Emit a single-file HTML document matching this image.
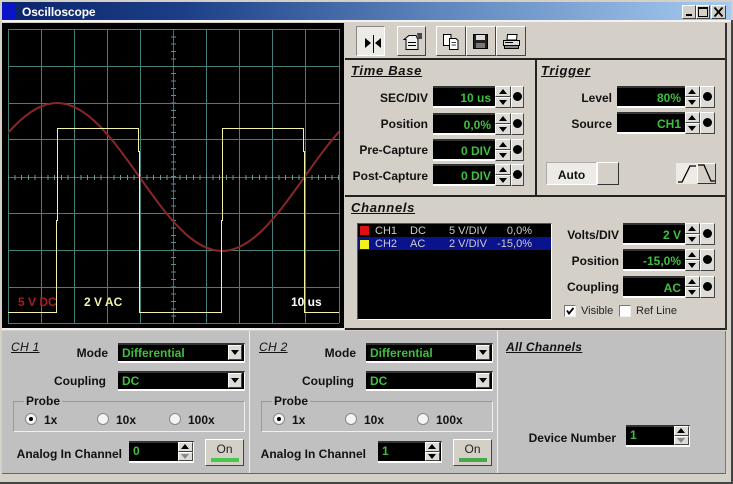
<!DOCTYPE html>
<html><head><meta charset="utf-8"><title>Oscilloscope</title>
<style>
html,body{margin:0;padding:0;background:#d4d0c8;}
#p{position:relative;width:733px;height:484px;overflow:hidden;background:#d4d0c8;font-family:"Liberation Sans",sans-serif;font-size:12px;color:#000;}
#p div,#p span.a{position:absolute;box-sizing:border-box;}
.l{font-weight:bold;text-align:right;white-space:nowrap;line-height:14px;height:14px;color:#111;}
.t{font-weight:bold;font-style:italic;text-decoration:underline;font-size:13px;line-height:15px;white-space:nowrap;letter-spacing:.7px;color:#111;}
.f{background:#000;color:#3fbf3f;font-weight:bold;text-align:right;line-height:21px;padding-right:4px;border-top:2px solid #333;border-bottom:2px solid #fff;white-space:nowrap;}
.fl{text-align:left;padding-left:4px;padding-right:0;line-height:17px;border-right:1px solid #fff;}
.b{background:#dedcd6;border:1px solid;border-color:#fff #444 #444 #fff;}
.u{width:0;height:0;border-left:4px solid transparent;border-right:4px solid transparent;border-bottom:5px solid #000;left:3px;}
.d{width:0;height:0;border-left:4px solid transparent;border-right:4px solid transparent;border-top:5px solid #000;left:3px;}
.dot{width:9px;height:9px;border-radius:50%;background:#000;}
.list{font-size:11px;color:#ccc;white-space:nowrap;line-height:14px;height:14px;}
.rad{width:12px;height:12px;border-radius:50%;background:#f4f4f4;border:1px solid #888;}
.rl{font-weight:bold;color:#111;line-height:14px;white-space:nowrap;}
.sm{font-size:11px;line-height:14px;color:#222;white-space:nowrap;}
</style></head><body><div id="p">
<div style="left:2px;top:2px;width:729px;height:18px;background:linear-gradient(90deg,#0a246a 0,#1d3f87 25%,#5f86bd 60%,#a6caf0 100%);"></div>
<div style="left:2px;top:3px;width:14px;height:16px;background:#0a14c8;"></div>
<div style="left:22px;top:5px;color:#fff;font-weight:bold;font-size:12px;line-height:15px;letter-spacing:-.1px;">Oscilloscope</div>
<div class="b" style="left:682px;top:5px;width:14px;height:14px;background:#d4d0c8;"><div style="left:3px;top:8px;width:6px;height:2px;background:#000;"></div></div>
<div class="b" style="left:696px;top:5px;width:14px;height:14px;background:#d4d0c8;"><div style="left:1px;top:1px;width:10px;height:10px;border:1px solid #000;border-top-width:2px;"></div></div>
<div class="b" style="left:711px;top:5px;width:15px;height:14px;background:#d4d0c8;"><svg width="13" height="12" style="position:absolute;left:0;top:0"><path d="M2.5 1.5L10.5 10.5M10.5 1.5L2.5 10.5" stroke="#000" stroke-width="1.8"/></svg></div>
<div style="left:2px;top:20px;width:729px;height:2px;background:#f2f2f2;"></div>

<div style="left:2px;top:23px;width:342px;height:307px;background:#000;border-bottom:2px solid #eee;"></div>
<svg width="733" height="484" style="position:absolute;left:0;top:0;" xmlns="http://www.w3.org/2000/svg">
<defs><clipPath id="c"><rect x="8" y="29" width="331" height="295"/></clipPath></defs>
<g stroke="#447f79" stroke-width="1" fill="none" shape-rendering="crispEdges">
<path d="M41.5 29V323M74.5 29V323M107.5 29V323M140.5 29V323M206.5 29V323M239.5 29V323M272.5 29V323M305.5 29V323M8.5 29V323M339.5 29V323"/>
<path d="M8 29.5H339M8 66.5H339M8 103.5H339M8 139.5H339M8 213.5H339M8 250.5H339M8 287.5H339M8 323.5H339"/>
<path d="M173.5 29V323M8 177.5H339" stroke="#3a7078"/>
<path d="M8 177.5H339" stroke="#6f9a94" stroke-width="5" stroke-dasharray="1 5.6"/>
<path d="M173.5 29V323" stroke="#5a8a94" stroke-width="5" stroke-dasharray="1 6.35"/>
</g>
<path clip-path="url(#c)" d="M-108 251C-47.9 251 -3.1 103 57 103C117.1 103 161.9 251 222 251C282.1 251 326.9 103 387 103" fill="none" stroke="#8a2626" stroke-width="2"/>
<path d="M8 312.5H56.5V220.5H57.5V128.5H138.5V151.5H139.5V312.5H221.5V220.5H222.5V128.5H303.5V151.5H304.5V312.5H339" fill="none" stroke="#f2f2a8" stroke-width="1" shape-rendering="crispEdges"/>
</svg>
<div style="left:18px;top:295px;color:#a81c28;font-weight:bold;font-size:12px;line-height:14px;">5 V DC</div>
<div style="left:84px;top:295px;color:#f2f2a8;font-weight:bold;font-size:12px;line-height:14px;">2 V AC</div>
<div style="left:291px;top:295px;color:#fff;font-weight:bold;font-size:12px;line-height:14px;">10 us</div>

<!-- right panel frames -->
<div style="left:345px;top:58px;width:381px;height:2px;background:#222;"></div>
<div style="left:535px;top:58px;width:2px;height:138px;background:#222;"></div>
<div style="left:345px;top:195px;width:381px;height:2px;background:#222;"></div>
<div style="left:345px;top:328px;width:381px;height:2px;background:#222;"></div>
<div style="left:725px;top:23px;width:2px;height:307px;background:#333;"></div>

<!-- toolbar -->
<div style="left:356px;top:26px;width:29px;height:30px;background:#ecebe6;border:1px solid;border-color:#888 #fff #fff #888;"></div>
<svg width="30" height="20" style="position:absolute;left:357px;top:34px;"><path d="M8 4L14 9L8 14Z M24 4L18 9L24 14Z" fill="#000"/><path d="M16.5 1V19" stroke="#000" stroke-width="1"/></svg>
<div class="b" style="left:397px;top:26px;width:29px;height:30px;background:#d4d0c8;"></div>
<svg width="24" height="20" style="position:absolute;left:400px;top:31px;" fill="none" stroke="#000"><path d="M4 8.5L9 4.5H16L18 8.5V18.5H6V8.5Z" fill="#eee"/><path d="M8 11.5H16M8 14.5H16"/><path d="M17 2H22V8H18Z" fill="#445" stroke="none"/></svg>
<div class="b" style="left:436px;top:26px;width:30px;height:30px;background:#d4d0c8;"></div>
<svg width="20" height="20" style="position:absolute;left:442px;top:33px;" fill="#fff" stroke="#000"><path d="M1.5 1.5H9V12.5H1.5Z"/><path d="M7.5 5.5H14L16 7.5V16.5H7.5Z"/><path d="M9.5 9.5H14M9.5 12H14" stroke-width=".8"/></svg>
<div class="b" style="left:466px;top:26px;width:30px;height:30px;background:#d4d0c8;"></div>
<svg width="18" height="18" style="position:absolute;left:472px;top:33px;"><path d="M1.5 1.5H15.5V15.5H1.5Z" fill="#222" stroke="#000"/><rect x="4" y="2" width="9" height="5" fill="#ddd"/><rect x="4" y="10" width="9" height="5" fill="#777"/></svg>
<div class="b" style="left:496px;top:26px;width:30px;height:30px;background:#d4d0c8;"></div>
<svg width="20" height="18" style="position:absolute;left:502px;top:33px;" fill="#ddd" stroke="#000"><path d="M5.5 1.5H15L14.5 7H5Z" fill="#fff"/><path d="M1.5 7.5H17.5V12.5H1.5Z"/><path d="M2.5 12.5H16.5V15.5H2.5Z" fill="#888"/><path d="M3 9.5H11" stroke-width="1"/></svg>

<div class="t" style="left:351px;top:63px;">Time Base</div>
<div class="t" style="left:541px;top:63px;">Trigger</div>
<div class="t" style="left:351px;top:200px;">Channels</div>

<!-- time base -->
<div class="l" style="left:350px;width:78px;top:91px;">SEC/DIV</div>
<div class="f" style="left:433px;top:86px;width:62px;height:22px;">10 us</div>
<div class="b" style="left:495px;top:86px;width:16px;height:11px;"><div class="u" style="top:2px;"></div></div><div class="b" style="left:495px;top:97px;width:16px;height:11px;"><div class="d" style="top:2px;"></div></div>
<div class="b" style="left:511px;top:86px;width:13px;height:22px;"><div class="dot" style="left:1px;top:5px;"></div></div>

<div class="l" style="left:350px;width:78px;top:117px;">Position</div>
<div class="f" style="left:433px;top:113px;width:62px;height:22px;">0,0%</div>
<div class="b" style="left:495px;top:113px;width:16px;height:11px;"><div class="u" style="top:2px;"></div></div><div class="b" style="left:495px;top:124px;width:16px;height:11px;"><div class="d" style="top:2px;"></div></div>
<div class="b" style="left:511px;top:113px;width:13px;height:22px;"><div class="dot" style="left:1px;top:5px;"></div></div>

<div class="l" style="left:350px;width:78px;top:143px;">Pre-Capture</div>
<div class="f" style="left:433px;top:139px;width:62px;height:22px;">0 DIV</div>
<div class="b" style="left:495px;top:139px;width:16px;height:11px;"><div class="u" style="top:2px;"></div></div><div class="b" style="left:495px;top:150px;width:16px;height:11px;"><div class="d" style="top:2px;"></div></div>
<div class="b" style="left:511px;top:139px;width:13px;height:22px;"><div class="dot" style="left:1px;top:5px;"></div></div>

<div class="l" style="left:350px;width:78px;top:169px;">Post-Capture</div>
<div class="f" style="left:433px;top:164px;width:62px;height:22px;">0 DIV</div>
<div class="b" style="left:495px;top:164px;width:16px;height:11px;"><div class="u" style="top:2px;"></div></div><div class="b" style="left:495px;top:175px;width:16px;height:11px;"><div class="d" style="top:2px;"></div></div>
<div class="b" style="left:511px;top:164px;width:13px;height:22px;"><div class="dot" style="left:1px;top:5px;"></div></div>

<!-- trigger -->
<div class="l" style="left:540px;width:72px;top:91px;">Level</div>
<div class="f" style="left:617px;top:86px;width:68px;height:22px;">80%</div>
<div class="b" style="left:685px;top:86px;width:15px;height:11px;"><div class="u" style="top:2px;left:2px;"></div></div><div class="b" style="left:685px;top:97px;width:15px;height:11px;"><div class="d" style="top:2px;left:2px;"></div></div>
<div class="b" style="left:700px;top:86px;width:15px;height:22px;"><div class="dot" style="left:2px;top:5px;"></div></div>

<div class="l" style="left:540px;width:72px;top:117px;">Source</div>
<div class="f" style="left:617px;top:112px;width:68px;height:22px;">CH1</div>
<div class="b" style="left:685px;top:112px;width:15px;height:11px;"><div class="u" style="top:2px;left:2px;"></div></div><div class="b" style="left:685px;top:123px;width:15px;height:11px;"><div class="d" style="top:2px;left:2px;"></div></div>
<div class="b" style="left:700px;top:112px;width:15px;height:22px;"><div class="dot" style="left:2px;top:5px;"></div></div>

<div style="left:546px;top:162px;width:51px;height:23px;background:#ecebe6;border:1px solid;border-color:#aaa #fff #fff #aaa;font-weight:bold;text-align:center;line-height:25px;color:#111;">Auto</div>
<div class="b" style="left:597px;top:162px;width:22px;height:23px;background:#d4d0c8;border-color:#fff #333 #333 #fff;"></div>
<div style="left:676px;top:163px;width:21px;height:21px;background:#ecebe6;"></div>
<div class="b" style="left:697px;top:163px;width:19px;height:21px;background:#d4d0c8;border-color:#fff #333 #333 #fff;"></div>
<svg width="40" height="21" style="position:absolute;left:676px;top:163px;" fill="none" stroke="#000" stroke-width="1.3"><path d="M2 19H6L14 3H20M22 2H28L35 18H39"/></svg>

<!-- channels list -->
<div style="left:357px;top:223px;width:195px;height:97px;background:#000;border:1px solid;border-color:#555 #fff #fff #555;"></div>
<div style="left:358px;top:237px;width:193px;height:13px;background:#0a128c;"></div>
<div style="left:360px;top:226px;width:9px;height:9px;background:#e01010;"></div>
<div style="left:360px;top:240px;width:9px;height:9px;background:#f4f020;"></div>
<div class="list" style="left:375px;top:224px;">CH1</div><div class="list" style="left:410px;top:224px;">DC</div><div class="list" style="left:449px;top:224px;">5 V/DIV</div><div class="list" style="left:490px;width:42px;text-align:right;top:224px;">0,0%</div>
<div class="list" style="left:375px;top:237px;">CH2</div><div class="list" style="left:410px;top:237px;">AC</div><div class="list" style="left:449px;top:237px;">2 V/DIV</div><div class="list" style="left:490px;width:42px;text-align:right;top:237px;">-15,0%</div>

<div class="l" style="left:540px;width:79px;top:228px;">Volts/DIV</div>
<div class="f" style="left:623px;top:223px;width:62px;height:22px;">2 V</div>
<div class="b" style="left:685px;top:223px;width:15px;height:11px;"><div class="u" style="top:2px;left:2px;"></div></div><div class="b" style="left:685px;top:234px;width:15px;height:11px;"><div class="d" style="top:2px;left:2px;"></div></div>
<div class="b" style="left:700px;top:223px;width:15px;height:22px;"><div class="dot" style="left:2px;top:5px;"></div></div>

<div class="l" style="left:540px;width:79px;top:254px;">Position</div>
<div class="f" style="left:623px;top:249px;width:62px;height:22px;">-15,0%</div>
<div class="b" style="left:685px;top:249px;width:15px;height:11px;"><div class="u" style="top:2px;left:2px;"></div></div><div class="b" style="left:685px;top:260px;width:15px;height:11px;"><div class="d" style="top:2px;left:2px;"></div></div>
<div class="b" style="left:700px;top:249px;width:15px;height:22px;"><div class="dot" style="left:2px;top:5px;"></div></div>

<div class="l" style="left:540px;width:79px;top:280px;">Coupling</div>
<div class="f" style="left:623px;top:276px;width:62px;height:22px;">AC</div>
<div class="b" style="left:685px;top:276px;width:15px;height:11px;"><div class="u" style="top:2px;left:2px;"></div></div><div class="b" style="left:685px;top:287px;width:15px;height:11px;"><div class="d" style="top:2px;left:2px;"></div></div>
<div class="b" style="left:700px;top:276px;width:15px;height:22px;"><div class="dot" style="left:2px;top:5px;"></div></div>

<div style="left:564px;top:305px;width:12px;height:12px;background:#fff;border:1px solid;border-color:#777 #eee #eee #777;"></div>
<svg width="12" height="12" style="position:absolute;left:564px;top:305px;"><path d="M3 5.5L5 8.5L9.5 3" fill="none" stroke="#000" stroke-width="1.8"/></svg>
<div class="sm" style="left:581px;top:304px;">Visible</div>
<div style="left:619px;top:305px;width:12px;height:12px;background:#fff;border:1px solid;border-color:#777 #eee #eee #777;"></div>
<div class="sm" style="left:636px;top:304px;">Ref Line</div>

<!-- bottom -->
<div style="left:2px;top:331px;width:723px;height:142px;background:#c0c0c0;"></div>
<div style="left:249px;top:331px;width:1px;height:142px;background:#eee;"></div>
<div style="left:497px;top:331px;width:1px;height:142px;background:#eee;"></div>
<div style="left:2px;top:473px;width:723px;height:1px;background:#666;"></div>
<div style="left:725px;top:331px;width:1px;height:143px;background:#777;"></div>
<div style="left:0;top:482px;width:733px;height:2px;background:#444;"></div>
<div style="left:731px;top:20px;width:2px;height:464px;background:#444;"></div>

<!-- CH1 -->
<div class="t" style="left:11px;top:340px;font-size:12px;letter-spacing:.3px;font-weight:normal;">CH 1</div>
<div class="l" style="left:50px;width:58px;top:346px;">Mode</div>
<div class="f fl" style="left:118px;top:343px;width:127px;height:20px;">Differential</div>
<div class="b" style="left:228px;top:345px;width:14px;height:15px;"><div class="d" style="top:4px;left:2px;"></div></div>
<div class="l" style="left:30px;width:76px;top:374px;">Coupling</div>
<div class="f fl" style="left:118px;top:371px;width:127px;height:20px;">DC</div>
<div class="b" style="left:228px;top:373px;width:14px;height:15px;"><div class="d" style="top:4px;left:2px;"></div></div>
<div style="left:13px;top:401px;width:232px;height:31px;border:1px solid #999;border-right-color:#eee;border-bottom-color:#eee;"></div>
<div class="rl" style="left:24px;top:394px;background:#c0c0c0;padding:0 2px;">Probe</div>
<div class="rad" style="left:25px;top:413px;"><div style="left:3px;top:3px;width:4px;height:4px;border-radius:50%;background:#000;"></div></div>
<div class="rl" style="left:44px;top:413px;">1x</div>
<div class="rad" style="left:97px;top:413px;"></div><div class="rl" style="left:116px;top:413px;">10x</div>
<div class="rad" style="left:169px;top:413px;"></div><div class="rl" style="left:188px;top:413px;">100x</div>
<div class="l" style="left:10px;width:112px;top:447px;text-align:right;">Analog In Channel</div>
<div class="f fl" style="left:129px;top:441px;width:65px;height:22px;">0</div>
<div class="b" style="left:178px;top:442px;width:15px;height:10px;"><div class="u" style="top:1px;left:2px;"></div></div><div class="b" style="left:178px;top:452px;width:15px;height:9px;"><div class="d" style="top:1px;left:2px;border-top-color:#888;"></div></div>
<div class="b" style="left:205px;top:439px;width:39px;height:27px;background:#d4d0c8;text-align:center;line-height:18px;color:#222;">On<div style="left:5px;top:18px;width:28px;height:4px;background:#46c84a;"></div></div>

<!-- CH2 -->
<div class="t" style="left:259px;top:340px;font-size:12px;letter-spacing:.3px;font-weight:normal;">CH 2</div>
<div class="l" style="left:298px;width:58px;top:346px;">Mode</div>
<div class="f fl" style="left:366px;top:343px;width:127px;height:20px;">Differential</div>
<div class="b" style="left:476px;top:345px;width:14px;height:15px;"><div class="d" style="top:4px;left:2px;"></div></div>
<div class="l" style="left:278px;width:76px;top:374px;">Coupling</div>
<div class="f fl" style="left:366px;top:371px;width:127px;height:20px;">DC</div>
<div class="b" style="left:476px;top:373px;width:14px;height:15px;"><div class="d" style="top:4px;left:2px;"></div></div>
<div style="left:261px;top:401px;width:232px;height:31px;border:1px solid #999;border-right-color:#eee;border-bottom-color:#eee;"></div>
<div class="rl" style="left:272px;top:394px;background:#c0c0c0;padding:0 2px;">Probe</div>
<div class="rad" style="left:273px;top:413px;"><div style="left:3px;top:3px;width:4px;height:4px;border-radius:50%;background:#000;"></div></div>
<div class="rl" style="left:292px;top:413px;">1x</div>
<div class="rad" style="left:345px;top:413px;"></div><div class="rl" style="left:364px;top:413px;">10x</div>
<div class="rad" style="left:417px;top:413px;"></div><div class="rl" style="left:436px;top:413px;">100x</div>
<div class="l" style="left:254px;width:112px;top:447px;">Analog In Channel</div>
<div class="f fl" style="left:378px;top:441px;width:64px;height:22px;">1</div>
<div class="b" style="left:425px;top:442px;width:15px;height:10px;"><div class="u" style="top:1px;left:2px;"></div></div><div class="b" style="left:425px;top:452px;width:15px;height:9px;"><div class="d" style="top:1px;left:2px;"></div></div>
<div class="b" style="left:453px;top:439px;width:39px;height:27px;background:#d4d0c8;text-align:center;line-height:18px;color:#222;">On<div style="left:5px;top:18px;width:28px;height:4px;background:#46a84a;"></div></div>

<!-- All channels -->
<div class="t" style="left:506px;top:340px;font-size:12px;letter-spacing:.3px;">All Channels</div>
<div class="l" style="left:510px;width:106px;top:431px;">Device Number</div>
<div class="f fl" style="left:626px;top:425px;width:64px;height:22px;">1</div>
<div class="b" style="left:674px;top:426px;width:15px;height:10px;"><div class="u" style="top:1px;left:2px;"></div></div><div class="b" style="left:674px;top:436px;width:15px;height:9px;"><div class="d" style="top:1px;left:2px;border-top-color:#888;"></div></div>
</div></body></html>
